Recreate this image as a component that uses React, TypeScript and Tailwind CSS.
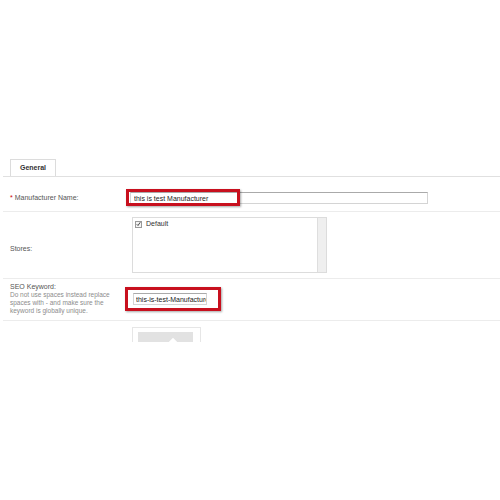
import React from "react";

const App: React.FC = () => {
    return (
        <div className="w-[500px] h-[500px] bg-white pt-[159px] font-['Liberation_Sans',Arial,sans-serif] text-[7px] leading-[8px] text-[#555] overflow-hidden">
            {/* Tabs */}
            <div className="ml-[3px] flex border-b border-[#e0e0e0]">
                <div className="ml-[7px] w-[46px] h-[17px] border border-b-0 border-[#dcdcdc] flex items-center justify-center font-bold text-[#333]">
                    General
                </div>
            </div>

            {/* Manufacturer Name */}
            <div className="ml-[3px] h-[35px] pt-[15px] border-b border-[#ececec] flex">
                <div className="w-[127px] h-[12px] pl-[7px] flex items-center">
                    <span className="text-[#cc0000] mr-[2px]">*</span>
                    <span>Manufacturer Name:</span>
                </div>
                <div className="relative">
                    <input
                        readOnly
                        value="this is test Manufacturer"
                        className="block w-[298px] h-[12px] border border-[#d4d4d4] border-t-[#aaa] bg-white pl-[3px] text-[7px] leading-[8px] text-[#222] outline-none"
                    />
                    <div className="absolute left-[-4px] top-[-3px] w-[114px] h-[17px] border-[3px] border-[#c8101e] shadow-[1px_1px_2px_rgba(0,0,0,0.35)]" />
                </div>
            </div>

            {/* Stores */}
            <div className="ml-[3px] h-[67px] pt-[5px] border-b border-[#ececec] flex">
                <div className="w-[127px] pl-[7px] flex items-center pt-[2px]">Stores:</div>
                <div className="ml-[2px] w-[195px] h-[56px] border border-[#dcdcdc] flex">
                    <div className="flex-1 pt-[2px] pl-[2px]">
                        <div className="flex items-center gap-[4px] text-[#333]">
                            <span className="w-[7px] h-[7px] border border-[#999] bg-[#f4f4f4] flex items-center justify-center">
                                <svg width="6" height="6" viewBox="0 0 10 10">
                                    <path d="M1.5 5.5 L4 8 L8.5 1.5" fill="none" stroke="#333" strokeWidth="1.8" />
                                </svg>
                            </span>
                            <span>Default</span>
                        </div>
                    </div>
                    <div className="w-[9px] h-full bg-[#efefef] border-l border-[#dedede]" />
                </div>
            </div>

            {/* SEO Keyword */}
            <div className="ml-[3px] h-[42px] pt-[4px] border-b border-[#ececec] flex">
                <div className="w-[127px] pl-[7px]">
                    <div className="text-[#555]">SEO Keyword:</div>
                    <div className="text-[#8c8c8c] text-[6.5px] leading-[8px] w-[110px]">
                        Do not use spaces instead replace spaces with - and make sure the keyword is globally unique.
                    </div>
                </div>
                <div className="relative ml-[3px] mt-[10px]">
                    <input
                        readOnly
                        value="this-is-test-Manufacturer"
                        className="block w-[74px] h-[12px] border border-[#d4d4d4] border-t-[#aaa] bg-white pl-[2px] text-[7px] leading-[8px] text-[#222] outline-none"
                    />
                    <div className="absolute left-[-8px] top-[-6px] w-[96px] h-[24px] border-[3px] border-[#c8101e] shadow-[1px_1px_2px_rgba(0,0,0,0.35)]" />
                </div>
            </div>

            {/* Image */}
            <div className="ml-[3px] pt-[6px] flex">
                <div className="w-[129px]" />
                <div className="w-[69px] h-[15px] border border-b-0 border-[#e6e6e6] pl-[5px] pt-[4px] overflow-hidden">
                    <div className="relative w-[55px] h-[12px] bg-[#e2e2e2]">
                        <div className="absolute left-[32px] top-[7px] w-[6px] h-[6px] bg-white rotate-45" />
                    </div>
                </div>
            </div>
        </div>
    );
};

export default App;
